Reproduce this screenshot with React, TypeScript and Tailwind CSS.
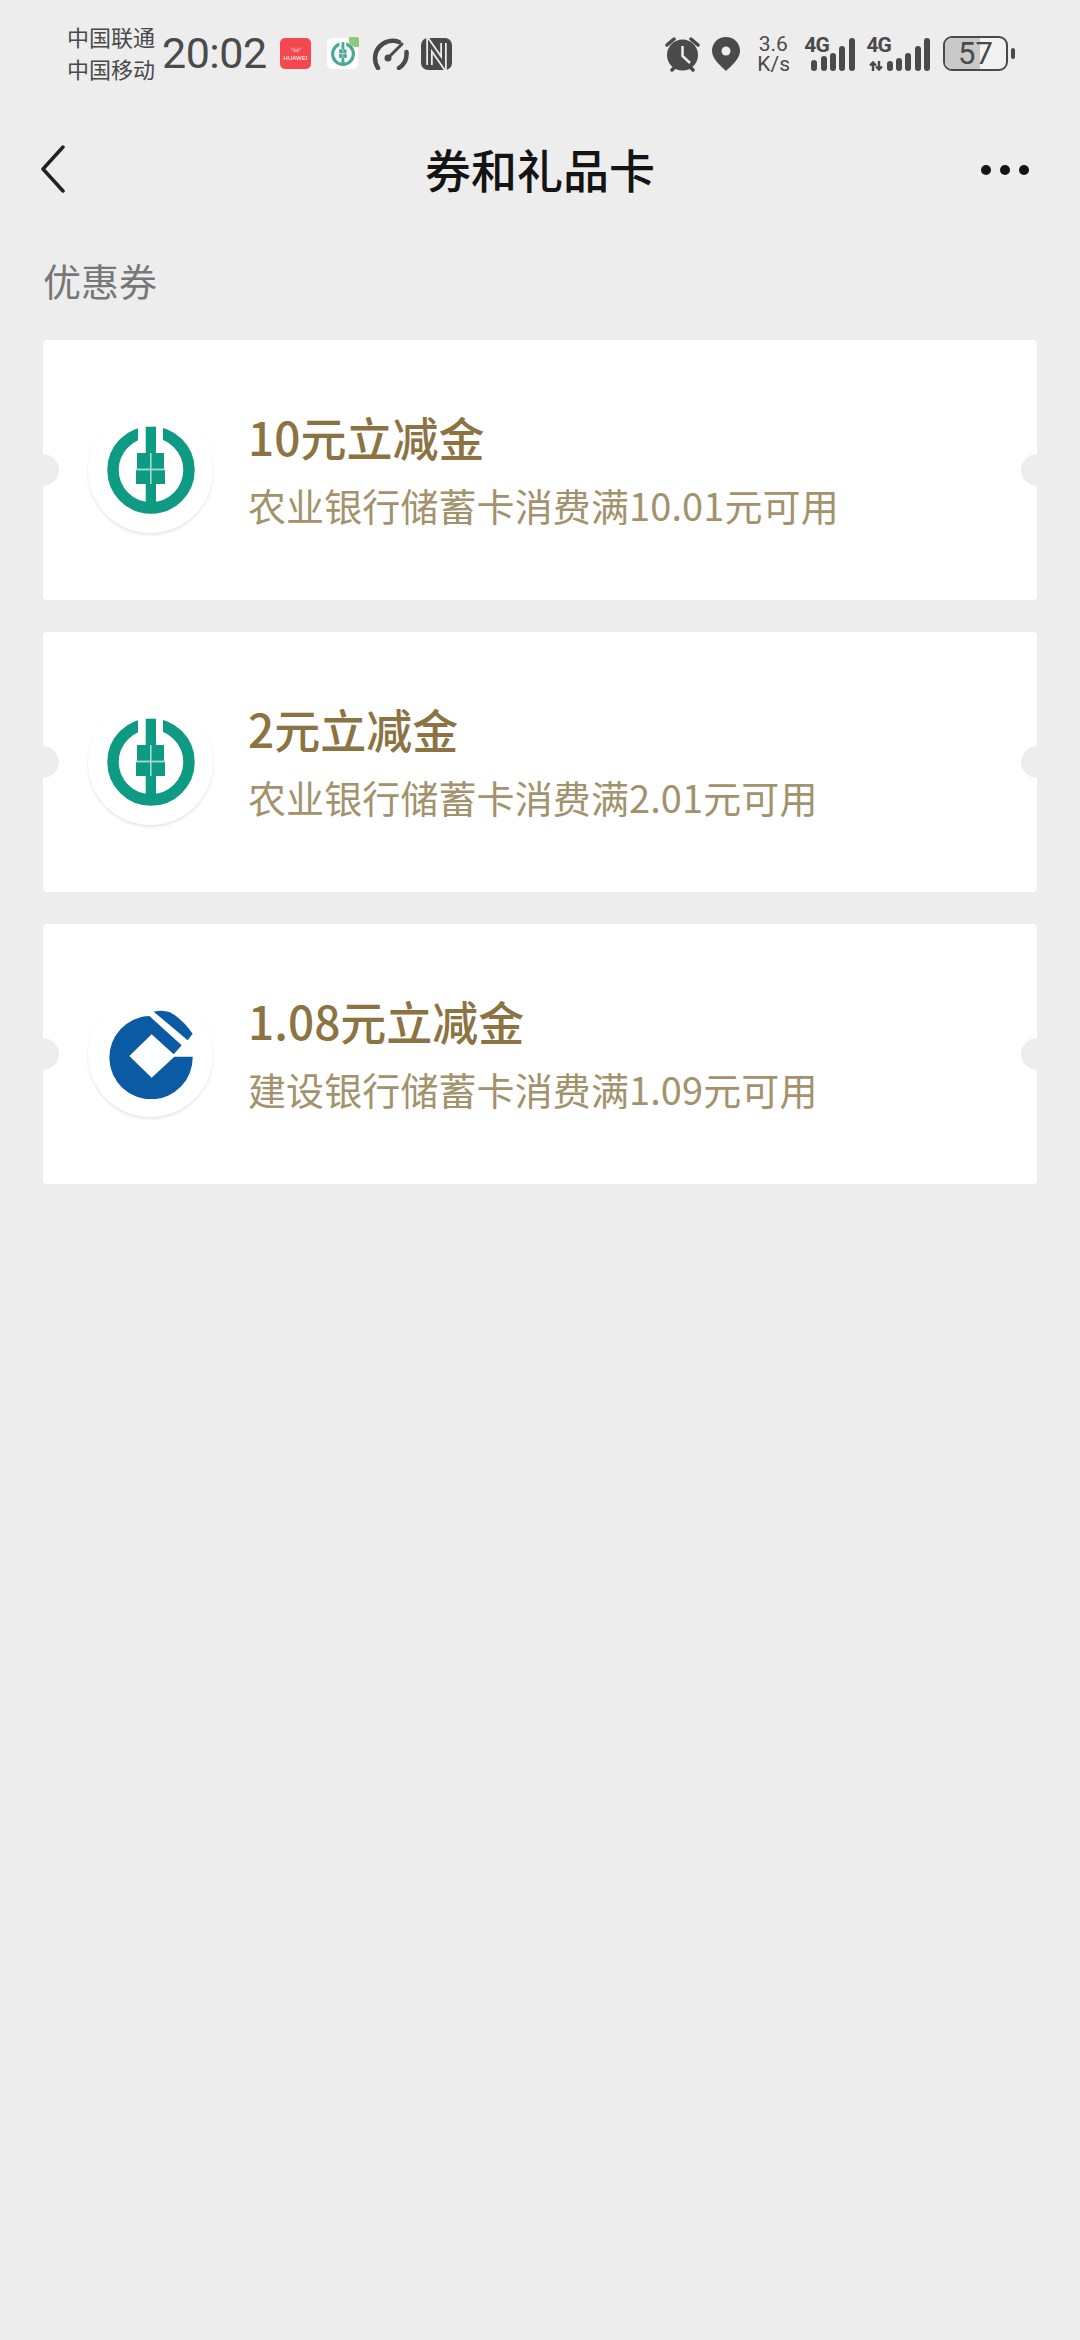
const coupons = [
  { title: '10元立减金', desc: '农业银行储蓄卡消费满10.01元可用', bank: 'abc' },
  { title: '2元立减金', desc: '农业银行储蓄卡消费满2.01元可用', bank: 'abc' },
  { title: '1.08元立减金', desc: '建设银行储蓄卡消费满1.09元可用', bank: 'ccb' },
];

function AbcMark({ className, color = '#0f9a84', line = '#a5dcd1' }: { className: string; color?: string; line?: string }) {
  return (
    <svg viewBox="0 0 88 88" className={className}>
      <circle cx="44" cy="44" r="38" fill="none" stroke={color} strokeWidth="11.5" />
      <rect x="31" y="0" width="25" height="28" fill="#fff" />
      <rect x="38.7" y="0.7" width="10.3" height="27" fill={color} />
      <rect x="30" y="27" width="27" height="16" fill={color} />
      <rect x="29" y="44" width="29" height="14" fill={color} />
      <rect x="38.7" y="57" width="10.3" height="30" fill={color} />
      <rect x="43" y="27" width="1.6" height="31" fill={line} />
      <rect x="29" y="42.6" width="29" height="1.8" fill={line} />
    </svg>
  );
}

function CcbMark() {
  return (
    <svg viewBox="255 294 270 270" className="h-[90px] w-[90px]">
      <path
        d="M515 437A125 125 0 1 1 385 315L482 403L458 430L392 370L325 435L392 500L460 437Z"
        fill="#0a5ba4"
      />
      <path d="M398 302Q425 296 447 304Q482 322 515 368L500 388Z" fill="#0a5ba4" />
    </svg>
  );
}

function Signal({ bars, arrows }: { bars: number[]; arrows?: boolean }) {
  return (
    <div className={`relative flex h-[34px] items-end gap-[3.3px] ${arrows ? 'pl-[2px]' : 'pl-[7px]'}`}>
      <span className="absolute left-0 top-[-2px] text-[21px] leading-[21px] font-bold tracking-[-1px] text-[#4a4a4a] [font-family:'Roboto',sans-serif]">
        4G
      </span>
      {arrows && (
        <svg viewBox="0 0 14 10" className="mr-[1px] h-[10px] w-[14px]">
          <path d="M4 10V2M1 4.5L4 1.5L7 4.5M10 0V8M7 5.5L10 8.5L13 5.5" fill="none" stroke="#4a4a4a" strokeWidth="2.4" />
        </svg>
      )}
      {bars.map((h, i) => (
        <div key={i} className="w-[6px] rounded-full bg-[#4a4a4a]" style={{ height: h }} />
      ))}
    </div>
  );
}

function StatusBar() {
  return (
    <div className="flex h-[107px] items-center justify-between pl-[67px] pr-[65px] text-[#4a4a4a]">
      <div className="flex items-center">
        <div className="mb-1 w-[88px] text-[22px] leading-[32px] whitespace-nowrap [font-family:'Noto_Sans_CJK_SC',sans-serif]">
          <div>中国联通</div>
          <div>中国移动</div>
        </div>
        <span className="ml-[7px] w-[105px] text-[43px] leading-none tracking-[-0.5px] whitespace-nowrap [font-family:'Roboto',sans-serif]">
          20:02
        </span>
        <div className="ml-[13px] flex h-[31px] w-[31px] flex-col items-center justify-center gap-[3px] rounded-[5px] bg-[#f4474f]">
          <svg viewBox="0 0 14 6" className="h-[5px] w-[12px]">
            <path d="M1 1Q3 5 6.5 5.5M13 1Q11 5 7.5 5.5M4 0.5Q5 3 6.8 4.5M10 0.5Q9 3 7.2 4.5" fill="none" stroke="#ffd9da" strokeWidth="1" />
          </svg>
          <span className="text-[6px] leading-[6px] text-white [font-family:'Liberation_Sans',sans-serif]">HUAWEI</span>
        </div>
        <div className="relative ml-4 flex h-[31px] w-[31px] items-center justify-center rounded-[5px] bg-white">
          <AbcMark className="h-[24px] w-[24px]" color="#4aa897" line="#ffffff" />
          <span className="absolute right-[-1px] top-[-1px] h-[10px] w-[10px] rounded-tr-[2px] rounded-bl-[6px] bg-[#8ccb7e]" />
        </div>
        <svg viewBox="0 0 39 33" className="ml-3 h-[33px] w-[39px]">
          <path d="M8 31A17.5 17.5 0 0 1 29 5" fill="none" stroke="#4a4a4a" strokeWidth="4.5" strokeLinecap="round" />
          <path d="M36.5 15A17.5 17.5 0 0 1 29 31" fill="none" stroke="#4a4a4a" strokeWidth="4.5" strokeLinecap="round" />
          <path d="M18 21L32 7" stroke="#4a4a4a" strokeWidth="3" strokeLinecap="round" />
          <circle cx="18" cy="21" r="3.5" fill="#4a4a4a" />
        </svg>
        <svg viewBox="0 0 31 32" className="ml-3 h-[32px] w-[31px]">
          <rect width="31" height="32" rx="7" fill="#4a4a4a" />
          <path d="M8.5 27V6L22.5 26V5" fill="none" stroke="#ededed" strokeWidth="6.5" />
          <path d="M8.5 27V6L22.5 26V5" fill="none" stroke="#4a4a4a" strokeWidth="3" />
        </svg>
      </div>
      <div className="flex items-center">
        <svg viewBox="0 0 37 36" className="h-[36px] w-[37px]">
          <circle cx="18.5" cy="19" r="15.5" fill="#4a4a4a" />
          <path d="M3 9L10 3M34 9L27 3M8 34L11 31M29 34L26 31" stroke="#4a4a4a" strokeWidth="3.5" strokeLinecap="round" />
          <path d="M18.5 10V20L26 27" fill="none" stroke="#ededed" strokeWidth="2.5" />
        </svg>
        <svg viewBox="0 0 28 34" className="ml-[11px] h-[34px] w-[28px]">
          <path d="M14 0C6 0 0 6 0 14C0 22 9 29 14 34C19 29 28 22 28 14C28 6 22 0 14 0Z" fill="#4a4a4a" />
          <circle cx="14" cy="14" r="4.5" fill="#ededed" />
        </svg>
        <div className="ml-[17px] w-[32px] text-center text-[21px] leading-[20px] whitespace-nowrap [font-family:'Roboto',sans-serif]">
          <div>3.6</div>
          <div>K/s</div>
        </div>
        <div className="ml-[15px]">
          <Signal bars={[11, 15, 18, 25, 33]} />
        </div>
        <div className="ml-3">
          <Signal bars={[10, 13, 18, 25, 33]} arrows />
        </div>
        <div className="relative ml-[13px] flex h-[35px] w-[65px] items-center justify-center overflow-hidden rounded-[9px] border-[2.5px] border-[#4a4a4a] bg-[#f2f2f2]">
          <div className="absolute inset-y-0 left-0 w-[57%] bg-[#c9c9c9]" />
          <span className="relative text-[31px] leading-none [font-family:'Roboto',sans-serif]">57</span>
        </div>
        <div className="ml-[3px] h-[11px] w-[4px] rounded-full bg-[#4a4a4a]" />
      </div>
    </div>
  );
}

function CouponCard({ title, desc, bank }: { title: string; desc: string; bank: string }) {
  return (
    <div className="relative flex h-[260px] items-center overflow-hidden rounded-[4px] bg-white pl-[45px]">
      <span className="absolute left-[-16px] top-[114px] h-8 w-8 rounded-full bg-[#ededed]" />
      <span className="absolute right-[-16px] top-[114px] h-8 w-8 rounded-full bg-[#ededed]" />
      <div className="flex h-[125px] w-[125px] shrink-0 items-center justify-center rounded-full bg-white shadow-[0_2px_3px_rgba(0,0,0,0.1)]">
        {bank === 'abc' ? <AbcMark className="h-[88px] w-[88px]" /> : <CcbMark />}
      </div>
      <div className="ml-[35px] pb-1">
        <div className="text-[46px] leading-[56px] font-medium text-[#8c7342]">{title}</div>
        <div className="mt-[17px] text-[38px] leading-[48px] tracking-[0.1px] text-[#a3926c]">{desc}</div>
      </div>
    </div>
  );
}

export default function App() {
  return (
    <div className="min-h-[2340px] bg-[#ededed] [font-family:'Noto_Sans_CJK_SC','Noto_Sans',sans-serif]">
      <StatusBar />
      <div className="grid h-[126px] grid-cols-[1fr_auto_1fr] items-center">
        <svg viewBox="0 0 26 48" className="mb-[2px] ml-10 h-12 w-[26px]">
          <path d="M23 2L3 24L23 46" fill="none" stroke="#222" strokeWidth="3.5" strokeLinecap="round" strokeLinejoin="round" />
        </svg>
        <h1 className="mb-[5px] text-[46px] leading-[56px] font-medium text-[#141414]">券和礼品卡</h1>
        <div className="flex justify-end gap-[9px] pr-[51px]">
          <span className="h-[10px] w-[10px] rounded-full bg-[#141414]" />
          <span className="h-[10px] w-[10px] rounded-full bg-[#141414]" />
          <span className="h-[10px] w-[10px] rounded-full bg-[#141414]" />
        </div>
      </div>
      <div className="px-[43px]">
        <div className="pt-[18px] pb-8 text-[38px] leading-[57px] text-[#777]">优惠券</div>
        <div className="flex flex-col gap-8">
          {coupons.map((c) => (
            <CouponCard key={c.title} {...c} />
          ))}
        </div>
      </div>
    </div>
  );
}
